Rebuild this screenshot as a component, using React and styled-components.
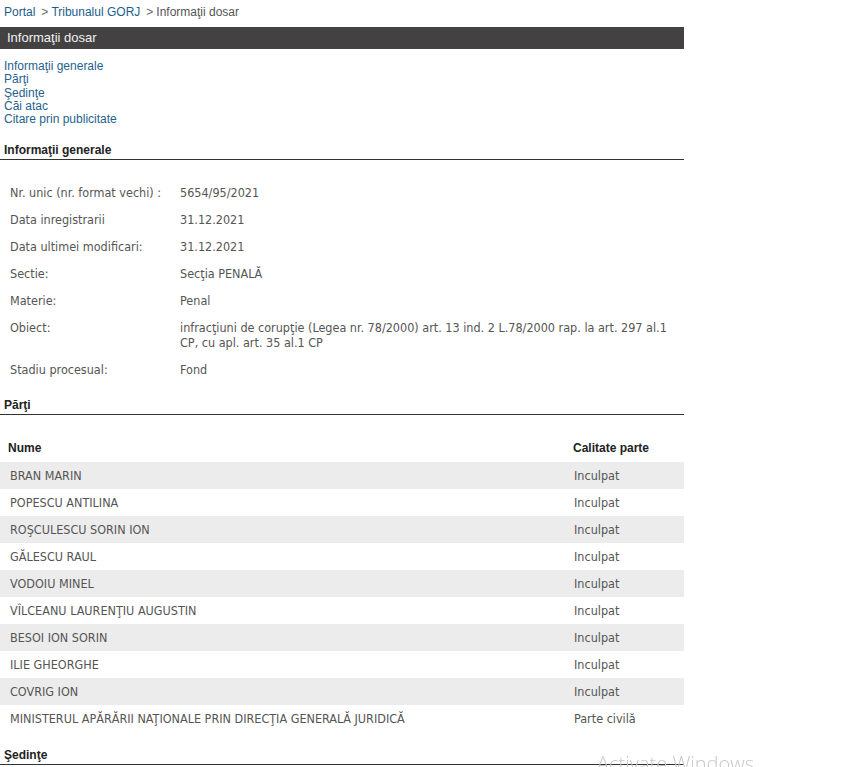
import React from "react";
import styled, { createGlobalStyle } from "styled-components";

const GlobalStyle = createGlobalStyle`
  html, body {
    margin: 0;
    padding: 0;
    background: #fff;
    overflow: hidden;
  }
  body {
    font-family: "Liberation Sans", Arial, sans-serif;
    font-size: 12px;
  }
`;

const Page = styled.div`
  width: 684px;
  height: 767px;
  overflow: hidden;
`;

const Breadcrumb = styled.div`
  padding: 5px 0 0 4px;
  height: 22px;
  box-sizing: border-box;
  font-size: 12px;
  color: #555;
  line-height: 14px;
`;

const Crumb = styled.a`
  color: #1d5e8c;
  text-decoration: none;
`;

const Sep = styled.span`
  margin: 0 3px 0 6px;
  color: #666;
`;

const TitleBar = styled.div`
  margin-top: 5px;
  height: 22px;
  background: #434142;
  color: #f2f2f2;
  font-size: 13px;
  line-height: 22px;
  padding-left: 7px;
`;

const NavList = styled.ul`
  list-style: none;
  margin: 0;
  padding: 11px 0 0 4px;
`;

const NavItem = styled.li`
  line-height: 13.3px;
  font-size: 12px;

  a {
    color: #1f6390;
    text-decoration: none;
  }
`;

const SectionTitle = styled.h3`
  margin: ${(p) => p.$top}px 0 0;
  padding: 0 0 1px 4px;
  font-size: 12px;
  font-weight: bold;
  color: #222;
  line-height: 15px;
  border-bottom: 1px solid #333;
`;

const InfoGrid = styled.div`
  display: grid;
  grid-template-columns: 170px 1fr;
  row-gap: 12px;
  padding: 25px 0 0 10px;
  font-family: "DejaVu Sans Condensed", "DejaVu Sans", Tahoma, sans-serif;
  font-size: 12.5px;
  color: #555;
  line-height: 15px;
`;

const Label = styled.div``;

const Value = styled.div`
  padding-right: 14px;
`;

const Table = styled.table`
  width: 684px;
  table-layout: fixed;
  border-collapse: collapse;
  margin-top: 26px;
  font-family: "DejaVu Sans Condensed", "DejaVu Sans", Tahoma, sans-serif;
  font-size: 12.5px;
  color: #555;
`;

const Th = styled.th`
  text-align: left;
  font-family: "Liberation Sans", Arial, sans-serif;
  font-size: 12px;
  line-height: 14px;
  color: #222;
  height: 14px;
  padding: 0 0 7px ${(p) => p.$pad}px;
  vertical-align: top;
  width: ${(p) => p.$w || "auto"};
`;

const Tr = styled.tr`
  background: ${(p) => (p.$odd ? "#ececec" : "#fff")};
`;

const Td = styled.td`
  height: 27px;
  padding: 0 0 0 ${(p) => p.$pad}px;
  vertical-align: middle;
  white-space: nowrap;
`;

const Watermark = styled.div`
  position: fixed;
  left: 597px;
  top: 750px;
  font-family: "Open Sans", "Noto Sans", sans-serif;
  font-weight: 300;
  font-size: 20px;
  color: #c8c8c8;
  white-space: nowrap;
  pointer-events: none;
`;

const info = [
  ["Nr. unic (nr. format vechi) :", "5654/95/2021"],
  ["Data inregistrarii", "31.12.2021"],
  ["Data ultimei modificari:", "31.12.2021"],
  ["Sectie:", "Secţia PENALĂ"],
  ["Materie:", "Penal"],
  [
    "Obiect:",
    "infracţiuni de corupţie (Legea nr. 78/2000) art. 13 ind. 2 L.78/2000 rap. la art. 297 al.1 CP, cu apl. art. 35 al.1 CP",
  ],
  ["Stadiu procesual:", "Fond"],
];

const parti = [
  ["BRAN MARIN", "Inculpat"],
  ["POPESCU ANTILINA", "Inculpat"],
  ["ROŞCULESCU SORIN ION", "Inculpat"],
  ["GĂLESCU RAUL", "Inculpat"],
  ["VODOIU MINEL", "Inculpat"],
  ["VÎLCEANU LAURENŢIU AUGUSTIN", "Inculpat"],
  ["BESOI ION SORIN", "Inculpat"],
  ["ILIE GHEORGHE", "Inculpat"],
  ["COVRIG ION", "Inculpat"],
  ["MINISTERUL APĂRĂRII NAŢIONALE PRIN DIRECŢIA GENERALĂ JURIDICĂ", "Parte civilă"],
];

const links = ["Informaţii generale", "Părţi", "Şedinţe", "Căi atac", "Citare prin publicitate"];

export default function App() {
  return (
    <>
      <GlobalStyle />
      <Page>
        <Breadcrumb>
          <Crumb href="#">Portal</Crumb>
          <Sep>&gt;</Sep>
          <Crumb href="#">Tribunalul GORJ</Crumb>
          <Sep>&gt;</Sep>
          Informaţii dosar
        </Breadcrumb>
        <TitleBar>Informaţii dosar</TitleBar>

        <NavList>
          {links.map((l) => (
            <NavItem key={l}>
              <a href="#">{l}</a>
            </NavItem>
          ))}
        </NavList>

        <SectionTitle $top={17}>Informaţii generale</SectionTitle>
        <InfoGrid>
          {info.map(([k, v]) => (
            <React.Fragment key={k}>
              <Label>{k}</Label>
              <Value>{v}</Value>
            </React.Fragment>
          ))}
        </InfoGrid>

        <SectionTitle $top={21}>Părţi</SectionTitle>
        <Table>
          <thead>
            <tr>
              <Th $pad={8}>Nume</Th>
              <Th $pad={5} $w="111px">Calitate parte</Th>
            </tr>
          </thead>
          <tbody>
            {parti.map(([n, c], i) => (
              <Tr key={n} $odd={i % 2 === 0}>
                <Td $pad={10}>{n}</Td>
                <Td $pad={6}>{c}</Td>
              </Tr>
            ))}
          </tbody>
        </Table>

        <SectionTitle $top={16}>Şedinţe</SectionTitle>
      </Page>
      <Watermark>Activate Windows</Watermark>
    </>
  );
}
